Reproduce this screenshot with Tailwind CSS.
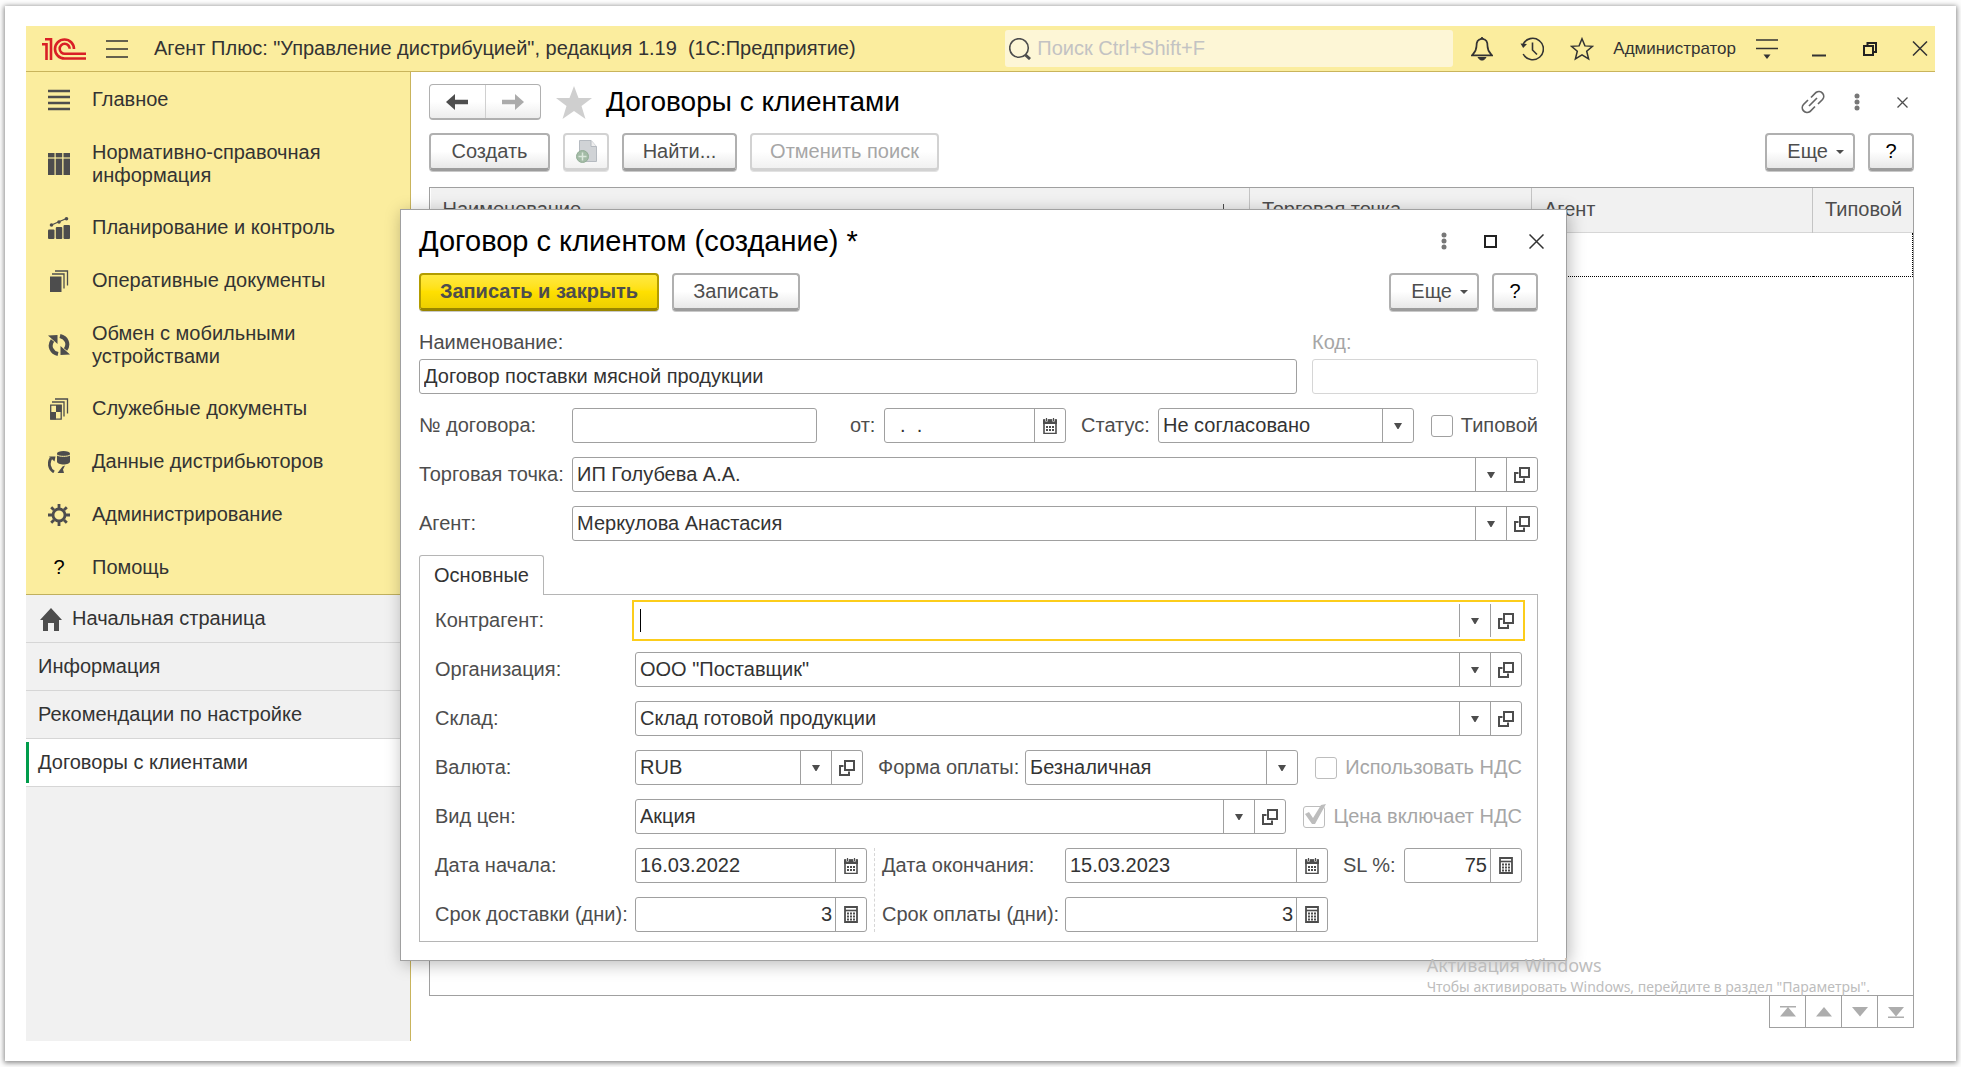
<!DOCTYPE html>
<html lang="ru">
<head>
<meta charset="utf-8">
<title>Договоры с клиентами</title>
<script src="https://cdn.jsdelivr.net/npm/@tailwindcss/browser@4"></script>
</head>
<body class="flex min-h-screen bg-[#fdfdfd] pt-[6px] pr-[5px] pb-[6px] pl-[5px] font-['Liberation_Sans',Arial,sans-serif] text-[20px] leading-[23px] text-[#333]">

<svg class="hidden" aria-hidden="true">
  <symbol id="down" viewBox="0 0 8 6"><path d="M0 0h8L4.500 6h-1z" fill="#4d4d4d"/></symbol>
  <symbol id="open" viewBox="0 0 16 16"><path d="M6 1h9v9H6z M4.500 6H1v9h9v-3.500" fill="none" stroke="#4d4d4d" stroke-width="2"/></symbol>
  <symbol id="cal" viewBox="0 0 14 16"><path d="M1 2h12v13.500H1z" fill="#fff" stroke="#4d4d4d" stroke-width="1.600"/><path d="M0 1.500h14V6H0z" fill="#4d4d4d"/><path d="M3.500 0v3.500M10.500 0v3.500" stroke="#fff" stroke-width="2.400"/><path d="M3.500 0v3M10.500 0v3" stroke="#4d4d4d" stroke-width="1.200"/><path d="M3 9h2m1 0h2m1 0h2M3 12h2m1 0h2m1 0h2" stroke="#4d4d4d" stroke-width="2"/></symbol>
  <symbol id="calc" viewBox="0 0 14 17"><path d="M1 1h12v15H1z" fill="#fff" stroke="#4d4d4d" stroke-width="1.800"/><path d="M1 4.500h12" stroke="#4d4d4d" stroke-width="1.600"/><path d="M3 7.500h2m1 0h2m1 0h2M3 10.500h2m1 0h2m1 0h2M3 13.500h2m1 0h2m1 0h2" stroke="#4d4d4d" stroke-width="1.800"/></symbol>
  <symbol id="dots" viewBox="0 0 6 18"><circle cx="3" cy="3" r="2.500"/><circle cx="3" cy="9" r="2.500"/><circle cx="3" cy="15" r="2.500"/></symbol>
</svg>

<div class="flex flex-1 bg-white px-[21px] py-[20px] shadow-[0_1px_5px_1px_rgba(0,0,0,0.45)]">
<div class="relative flex flex-1 flex-col">

  <header class="flex h-[46px] items-center border-b border-[#c9b45c] bg-[#fbed9e] pr-[7px] pl-[16px]">
    <svg class="h-[22px] w-[44px]" viewBox="0 0 44 22" fill="none" stroke="#d91f26" stroke-width="2.600"><path d="M0 6.300h4.500V22M3 1.300h6V22M44 20.500H22.500a9.500 9.500 0 1 1 9.500-9.500"/><path d="M44 15.800H23a5 5 0 1 1 4.700-5"/></svg>
    <button class="ml-[20px]" aria-label="Меню"><svg class="h-[18px] w-[22px]" viewBox="0 0 22 18" stroke="#333" stroke-width="1.400"><path d="M0 1h22M0 9h22M0 17h22"/></svg></button>
    <div class="ml-[26px] whitespace-nowrap">Агент Плюс: "Управление дистрибуцией", редакция 1.19&nbsp; (1С:Предприятие)</div>
    <label class="ml-auto flex h-[37px] w-[448px] items-center rounded-[3px] bg-[#fdf6d6] pl-[4px]">
      <svg class="h-[22px] w-[22px]" viewBox="0 0 22 22" fill="none" stroke="#4d4d4d"><circle cx="10" cy="10" r="9.300" stroke-width="1.600"/><path d="M16.500 17l4.500 4" stroke-width="3"/></svg>
      <input class="ml-[6px] min-w-0 flex-1 outline-none placeholder:text-[#c3c3c3]" placeholder="Поиск Ctrl+Shift+F" aria-label="Поиск">
    </label>
    <button class="ml-[18px]" aria-label="Уведомления"><svg class="h-[24px] w-[22px]" viewBox="0 0 22 24" fill="none" stroke="#333" stroke-width="1.700"><path d="M11 2c-4.500 0-5.500 3-5.500 7 0 5-2 6.500-4.500 9.300h20C18.500 15.500 16.500 14 16.500 9c0-4-1-7-5.500-7z"/><path d="M7 20.500h8l-2.500 2.500h-3zM9.500 1.500L11 .3l1.500 1.200z" fill="#333" stroke-width="1"/></svg></button>
    <button class="ml-[27px]" aria-label="История"><svg class="h-[24px] w-[24px]" viewBox="0 0 24 24" fill="none" stroke="#333" stroke-width="1.600"><path d="M3 7.500A10.700 10.700 0 1 1 3.200 17M12.500 5.500V13l4.500 4.500"/><path d="M.5 6.500l6.500.5-3.800 4z" fill="#333" stroke="none"/></svg></button>
    <button class="ml-[26px]" aria-label="Избранное"><svg class="h-[24px] w-[24px]" viewBox="0 0 24 24" fill="none" stroke="#333" stroke-width="1.500"><path d="M12 1.800l2.900 7.100 7.600.4-5.800 5 1.900 7.600L12 17.800l-6.600 4.100 1.900-7.600-5.800-5 7.600-.4z"/></svg></button>
    <div class="ml-[19px] text-[17px]">Администратор</div>
    <button class="ml-[20px]" aria-label="Настройки"><svg class="h-[22px] w-[22px]" viewBox="0 0 22 22"><path d="M0 2h22M0 10.500h22" stroke="#333" stroke-width="1.600"/><path d="M7.500 16.500h7L11 21z" fill="#333"/></svg></button>
    <button class="ml-[34px]" aria-label="Свернуть"><svg class="h-[16px] w-[14px]" viewBox="0 0 14 16"><path d="M0 14.500h14" stroke="#333" stroke-width="2"/></svg></button>
    <button class="ml-[37px]" aria-label="Восстановить"><svg class="h-[14px] w-[14px]" viewBox="0 0 14 14" fill="none" stroke="#222" stroke-width="2"><path d="M1 4h9v9H1zM4.500 3V1H13v9h-2"/></svg></button>
    <button class="ml-[35px]" aria-label="Закрыть"><svg class="h-[15px] w-[16px]" viewBox="0 0 16 15" stroke="#333" stroke-width="1.500"><path d="M1 .5l14 14M15 .5l-14 14"/></svg></button>
  </header>

  <div class="flex flex-1">
    <aside class="flex w-[385px] flex-col border-r border-[#c9b45c] bg-[#f1f1f1]">
      <nav class="border-b border-[#c0b05e] bg-[#fbed9e] pt-px">
        <a href="#" class="flex h-[53px] items-center gap-[22px] pl-[22px]">
          <svg class="h-[22px] w-[22px]" viewBox="0 0 22 22" stroke="#4d4d4d" stroke-width="2.600"><path d="M0 2h22M0 8h22M0 14h22M0 20h22"/></svg>Главное</a>
        <a href="#" class="flex h-[75px] items-center gap-[22px] pl-[22px]">
          <svg class="h-[22px] w-[22px]" viewBox="0 0 22 22" fill="#4d4d4d"><path d="M0 0h6.500v22H0zM7.700 0h6.500v22H7.700zM15.500 0H22v22h-6.500z"/><path d="M0 5h22" stroke="#fbed9e" stroke-width="1.200"/></svg><span>Нормативно-справочная<br>информация</span></a>
        <a href="#" class="flex h-[53px] items-center gap-[22px] pl-[22px]">
          <svg class="h-[22px] w-[22px]" viewBox="0 0 22 22" fill="#4d4d4d"><rect y="12.500" width="6.500" height="9.500" rx="1"/><rect x="7.800" y="10" width="6.500" height="12" rx="1"/><rect x="15.500" y="8" width="6.500" height="14" rx="1"/><path d="M3.500 8l8-3.500 7-3" fill="none" stroke="#4d4d4d" stroke-width="1.300"/><circle cx="3.500" cy="8" r="1.800"/><circle cx="11" cy="5" r="1.800"/><circle cx="18.500" cy="1.800" r="1.800"/></svg>Планирование и контроль</a>
        <a href="#" class="flex h-[53px] items-center gap-[22px] pl-[22px]">
          <svg class="h-[22px] w-[22px]" viewBox="0 0 22 22" fill="none" stroke="#4d4d4d" stroke-width="1.300"><path d="M2 6.500h11.500V22H2z" fill="#4d4d4d" stroke="none"/><path d="M4 4h12v14.500M7 1h12.500v14.500"/></svg>Оперативные документы</a>
        <a href="#" class="flex h-[75px] items-center gap-[22px] pl-[22px]">
          <svg class="h-[22px] w-[22px]" viewBox="0 0 22 22" fill="none" stroke="#4d4d4d" stroke-width="4"><path d="M10 20C3.500 18.500.500 12 4.500 6.500M12 2c6.500 1.500 9.500 8 5.500 13.500"/><path d="M0 1.500l9.500-.5v9zM22 20.500l-9.500.5v-9z" fill="#4d4d4d" stroke="none"/></svg><span>Обмен с мобильными<br>устройствами</span></a>
        <a href="#" class="flex h-[53px] items-center gap-[22px] pl-[22px]">
          <svg class="h-[22px] w-[22px]" viewBox="0 0 22 22" fill="none" stroke="#4d4d4d" stroke-width="1.300"><path d="M2.700 7.200h10.500v14H2.700zM4 4h12v14.500M7 1h12.500v14.500"/><path d="M8 7h5.500v7H8zM2.500 14H8v7.500H2.500z" fill="#4d4d4d" stroke="none"/></svg>Служебные документы</a>
        <a href="#" class="flex h-[53px] items-center gap-[22px] pl-[22px]">
          <svg class="h-[22px] w-[22px]" viewBox="0 0 22 22" fill="#4d4d4d"><path d="M9 2.500v8c0 4 13 4 13 0v-8z"/><ellipse cx="15.500" cy="2.300" rx="6.500" ry="2.200"/><path d="M9 4c2 1.800 11 1.800 13 0" fill="none" stroke="#fbed9e"/><path d="M6 21C1 18 0 12 3 7" fill="none" stroke="#4d4d4d" stroke-width="2.800"/><path d="M1 5.500h6.500l-1 5zM17 14.500l-2 4 1 3.500H9.500l5-6.500z"/></svg>Данные дистрибьюторов</a>
        <a href="#" class="flex h-[53px] items-center gap-[22px] pl-[22px]">
          <svg class="h-[22px] w-[22px]" viewBox="0 0 22 22" fill="none" stroke="#4d4d4d"><circle cx="11" cy="11" r="6" stroke-width="2.800"/><path d="M11 0v4M11 18v4M0 11h4M18 11h4M3.200 3.200L6 6M16 16l2.800 2.800M18.800 3.200L16 6M6 16l-2.800 2.800" stroke-width="2.800"/></svg>Администрирование</a>
        <a href="#" class="flex h-[53px] items-center gap-[22px] pl-[22px]">
          <span class="w-[22px] text-center text-black">?</span>Помощь</a>
      </nav>
      <a href="#" class="flex h-[48px] items-center gap-[10px] border-b border-[#d6d6d6] pl-[14px]">
        <svg class="h-[24px] w-[22px]" viewBox="0 0 22 24" fill="#4d4d4d"><path d="M11 1l11 12h-3v11h-5v-8H8v8H3V13H0z"/></svg>Начальная страница</a>
      <a href="#" class="flex h-[48px] items-center border-b border-[#d6d6d6] pl-[12px]">Информация</a>
      <a href="#" class="flex h-[48px] items-center border-b border-[#d6d6d6] pl-[12px]">Рекомендации по настройке</a>
      <a href="#" class="flex h-[48px] items-center border-b border-[#d6d6d6] bg-white"><span class="mr-[9px] h-[41px] w-[3px] bg-[#009c4b]"></span>Договоры с клиентами</a>
    </aside>

    <main class="flex flex-1 flex-col pt-[12px] pr-[21px] pb-[13px] pl-[18px]">
      <div class="flex h-[36px] items-center">
        <div class="flex h-[36px] w-[112px] rounded-[4px] border border-b-2 border-[#b0b0b0] bg-linear-to-b from-white from-50% to-[#ededed]">
          <button class="flex flex-1 items-center justify-center border-r border-[#d0d0d0]" aria-label="Назад"><svg class="h-[16px] w-[22px]" viewBox="0 0 22 16"><path d="M0 8l9-8v5.800h13v4.400H9V16z" fill="#4d4d4d"/></svg></button>
          <button class="flex flex-1 items-center justify-center" aria-label="Вперед"><svg class="h-[16px] w-[22px]" viewBox="0 0 22 16"><path d="M22 8l-9-8v5.800H0v4.400h13V16z" fill="#ababab"/></svg></button>
        </div>
        <svg class="ml-[15px] h-[33px] w-[36px]" viewBox="0 0 36 33"><path d="M18 0l4.500 12H36l-10.500 8 4 13L18 25 6.500 33l4-13L0 12h13.500z" fill="#cfcfcf"/></svg>
        <h1 class="ml-[14px] text-[28px] leading-[32px] text-black">Договоры с клиентами</h1>
        <a href="#" class="ml-auto" aria-label="Ссылка"><svg class="h-[24px] w-[24px]" viewBox="0 0 24 24" fill="none" stroke="#666" stroke-width="1.700"><path d="M10 7.500l5-5a4.800 4.800 0 0 1 6.500 7l-4.500 4.500M14 16.500l-5 5a4.800 4.800 0 0 1-6.500-7L7 10M8 16l8-8"/></svg></a>
        <button class="ml-[29px]" aria-label="Действия"><svg class="h-[18px] w-[6px] fill-[#777]"><use href="#dots"/></svg></button>
        <button class="mr-[6px] ml-[37px]" aria-label="Закрыть"><svg class="h-[11px] w-[11px]" viewBox="0 0 11 11" stroke="#4d4d4d" stroke-width="1.300"><path d="M.5.500l10 10M10.500.500l-10 10"/></svg></button>
      </div>

      <div class="mt-[13px] flex h-[38px]">
        <button class="w-[121px] rounded-[4px] border-2 border-b-3 border-[#b0b0b0] border-b-[#9c9c9c] bg-linear-to-b from-white from-50% to-[#e8e8e8] text-[#4d4d4d] shadow-[0_1px_0_#c9c9c9]">Создать</button>
        <button class="ml-[13px] flex w-[46px] items-center justify-center rounded-[4px] border-2 border-b-3 border-[#d2d2d2] bg-linear-to-b from-white from-50% to-[#f1f1f1] shadow-[0_1px_0_#e2e2e2]" aria-label="Скопировать"><svg class="h-[23px] w-[21px]" viewBox="0 0 21 23"><path d="M3.500.500H15l5.500 6v15h-17z" fill="#d0d3d6" stroke="#b5bac0"/><path d="M15 .5v6h5.500" fill="#eee" stroke="#b5bac0"/><circle cx="6.500" cy="16.500" r="6" fill="#a3bba6" stroke="#92ad96"/><path d="M6.500 12.500v8M2.500 16.500h8" stroke="#dbe8dc" stroke-width="1.500"/></svg></button>
        <button class="ml-[13px] w-[115px] rounded-[4px] border-2 border-b-3 border-[#b0b0b0] border-b-[#9c9c9c] bg-linear-to-b from-white from-50% to-[#e8e8e8] text-[#4d4d4d] shadow-[0_1px_0_#c9c9c9]">Найти...</button>
        <button class="ml-[13px] w-[189px] rounded-[4px] border-2 border-b-3 border-[#d2d2d2] bg-linear-to-b from-white from-50% to-[#f1f1f1] text-[#a6a6a6] shadow-[0_1px_0_#e2e2e2]">Отменить поиск</button>
        <button class="ml-auto flex w-[90px] items-center justify-end gap-[8px] rounded-[4px] border-2 border-b-3 border-[#b0b0b0] border-b-[#9c9c9c] bg-linear-to-b from-white from-50% to-[#e8e8e8] pr-[9px] text-[#4d4d4d] shadow-[0_1px_0_#c9c9c9]">Еще<svg class="h-[4px] w-[8px]" viewBox="0 0 8 4"><path d="M0 0h8L4 4z" fill="#4d4d4d"/></svg></button>
        <button class="ml-[13px] w-[46px] rounded-[4px] border-2 border-b-3 border-[#b0b0b0] border-b-[#9c9c9c] bg-linear-to-b from-white from-50% to-[#e8e8e8] text-black shadow-[0_1px_0_#c9c9c9]">?</button>
      </div>

      <div class="mt-[16px] flex-1 border border-[#a0a0a0]">
        <table class="w-full table-fixed border-collapse text-[#4d4d4d]">
          <colgroup><col><col class="w-[282px]"><col class="w-[281px]"><col class="w-[100px]"></colgroup>
          <thead>
            <tr class="h-[44px] border-b border-[#d6d6d6] bg-[#f1f1f1]">
              <th class="pr-[21px] pl-[12px] text-left font-normal"><span class="flex items-center justify-between">Наименование<svg class="h-[12px] w-[9px]" viewBox="0 0 9 12" fill="none" stroke="#4d4d4d"><path d="M4.500 0v11M1 8l3.500 3.500L8 8"/></svg></span></th>
              <th class="border-l border-[#c4c4c4] pl-[12px] text-left font-normal">Торговая точка</th>
              <th class="border-l border-[#c4c4c4] pl-[12px] text-left font-normal">Агент</th>
              <th class="border-l border-[#c4c4c4] pl-[12px] text-left font-normal">Типовой</th>
            </tr>
          </thead>
          <tbody>
            <tr class="h-[44px]"><td colspan="4" class="border border-dotted border-black"></td></tr>
          </tbody>
        </table>
      </div>
      <div class="flex h-[32px] self-end border-x border-b border-[#a0a0a0]">
        <button class="flex w-[36px] items-center justify-center border-r border-[#a0a0a0]" aria-label="В начало"><svg class="h-[12px] w-[16px]" viewBox="0 0 16 12" fill="#adadad"><path d="M0 0h16v1.500H0zM8 1l8 9.500H0z"/></svg></button>
        <button class="flex w-[36px] items-center justify-center border-r border-[#a0a0a0]" aria-label="Вверх"><svg class="h-[12px] w-[16px]" viewBox="0 0 16 12" fill="#adadad"><path d="M8 1l8 9.500H0z"/></svg></button>
        <button class="flex w-[36px] items-center justify-center border-r border-[#a0a0a0]" aria-label="Вниз"><svg class="h-[12px] w-[16px]" viewBox="0 0 16 12" fill="#adadad"><path d="M8 10.500L16 1H0z"/></svg></button>
        <button class="flex w-[35px] items-center justify-center" aria-label="В конец"><svg class="h-[12px] w-[16px]" viewBox="0 0 16 12" fill="#adadad"><path d="M8 10.500L16 1H0zM0 10.500h16V12H0z"/></svg></button>
      </div>
    </main>
  </div>

  <section role="dialog" aria-label="Договор с клиентом" class="absolute top-[183px] right-[368px] left-[374px] border border-[#a0a0a0] bg-white pt-[14px] pr-[28px] pb-[18px] pl-[18px] shadow-[2px_3px_16px_rgba(0,0,0,0.28)]">
    <div class="flex h-[34px] items-center">
      <h2 class="text-[29px] leading-[32px] text-black">Договор с клиентом (создание) *</h2>
      <button class="ml-auto" aria-label="Действия"><svg class="h-[18px] w-[6px] fill-[#777]"><use href="#dots"/></svg></button>
      <button class="ml-[37px]" aria-label="Развернуть"><svg class="h-[13px] w-[13px]" viewBox="0 0 13 13"><path d="M1 1h11v11H1z" fill="none" stroke="#222" stroke-width="2"/></svg></button>
      <button class="mr-[-6px] ml-[32px]" aria-label="Закрыть"><svg class="h-[15px] w-[15px]" viewBox="0 0 15 15" stroke="#333" stroke-width="1.500"><path d="M.5.500l14 14M14.500.500l-14 14"/></svg></button>
    </div>

    <div class="mt-[15px] flex h-[38px]">
      <button class="w-[240px] rounded-[4px] border-2 border-b-3 border-[#b29c00] border-b-[#988500] bg-linear-to-b from-[#ffe93e] via-[#ffe000] to-[#edcf00] font-bold text-[#4d4d4d] shadow-[0_1px_0_#c9c9c9]">Записать и закрыть</button>
      <button class="ml-[13px] w-[128px] rounded-[4px] border-2 border-b-3 border-[#b0b0b0] border-b-[#9c9c9c] bg-linear-to-b from-white from-50% to-[#e8e8e8] text-[#4d4d4d] shadow-[0_1px_0_#c9c9c9]">Записать</button>
      <button class="ml-auto flex w-[90px] items-center justify-end gap-[8px] rounded-[4px] border-2 border-b-3 border-[#b0b0b0] border-b-[#9c9c9c] bg-linear-to-b from-white from-50% to-[#e8e8e8] pr-[9px] text-[#4d4d4d] shadow-[0_1px_0_#c9c9c9]">Еще<svg class="h-[4px] w-[8px]" viewBox="0 0 8 4"><path d="M0 0h8L4 4z" fill="#4d4d4d"/></svg></button>
      <button class="ml-[13px] w-[46px] rounded-[4px] border-2 border-b-3 border-[#b0b0b0] border-b-[#9c9c9c] bg-linear-to-b from-white from-50% to-[#e8e8e8] text-black shadow-[0_1px_0_#c9c9c9]">?</button>
    </div>

    <form class="mt-[20px] flex flex-col gap-[14px] text-[#4d4d4d]">
      <div class="flex gap-[15px]">
        <label class="flex-1">Наименование:
          <input class="mt-[5px] block h-[35px] w-full rounded-[3px] border border-[#a0a0a0] px-[4px] text-[#333]" value="Договор поставки мясной продукции"></label>
        <label class="w-[226px] text-[#a6a6a6]">Код:
          <input disabled class="mt-[5px] block h-[35px] w-full rounded-[3px] border border-[#d6d6d6] px-[4px]"></label>
      </div>

      <div class="flex items-center">
        <label for="num" class="w-[153px]">№ договора:</label>
        <input id="num" class="h-[35px] w-[245px] rounded-[3px] border border-[#a0a0a0] px-[4px] text-[#333]">
        <label for="from" class="ml-[33px] w-[34px]">от:</label>
        <div class="flex h-[35px] w-[182px] rounded-[3px] border border-[#a0a0a0]">
          <input id="from" class="min-w-0 flex-1 px-[4px] text-[#333]" value="&nbsp;&nbsp;.&nbsp;&nbsp;.">
          <button type="button" class="flex w-[31px] items-center justify-center border-l border-[#a0a0a0]" aria-label="Календарь"><svg class="h-[16px] w-[14px]"><use href="#cal"/></svg></button>
        </div>
        <label for="status" class="ml-[15px] w-[77px]">Статус:</label>
        <div class="relative flex h-[35px] min-w-0 flex-1 rounded-[3px] border border-[#a0a0a0]">
          <select id="status" class="min-w-0 flex-1 appearance-none px-[4px] text-[#333]"><option>Не согласовано</option></select>
          <span class="pointer-events-none flex w-[31px] items-center justify-center border-l border-[#a0a0a0]"><svg class="h-[6px] w-[8px]"><use href="#down"/></svg></span>
        </div>
        <label class="ml-[17px] flex items-center gap-[8px]"><input type="checkbox" class="h-[22px] w-[22px] appearance-none rounded-[3px] border border-[#a0a0a0] bg-white">Типовой</label>
      </div>

      <div class="flex items-center">
        <label for="point" class="w-[153px] whitespace-nowrap">Торговая точка:</label>
        <div class="flex h-[35px] min-w-0 flex-1 rounded-[3px] border border-[#a0a0a0]">
          <input id="point" class="min-w-0 flex-1 px-[4px] text-[#333]" value="ИП Голубева А.А.">
          <button type="button" class="flex w-[31px] items-center justify-center border-l border-[#a0a0a0]" aria-label="Выбрать"><svg class="h-[6px] w-[8px]"><use href="#down"/></svg></button>
          <button type="button" class="flex w-[31px] items-center justify-center border-l border-[#a0a0a0]" aria-label="Открыть"><svg class="h-[16px] w-[16px]"><use href="#open"/></svg></button>
        </div>
      </div>

      <div class="flex items-center">
        <label for="agent" class="w-[153px]">Агент:</label>
        <div class="flex h-[35px] min-w-0 flex-1 rounded-[3px] border border-[#a0a0a0]">
          <input id="agent" class="min-w-0 flex-1 px-[4px] text-[#333]" value="Меркулова Анастасия">
          <button type="button" class="flex w-[31px] items-center justify-center border-l border-[#a0a0a0]" aria-label="Выбрать"><svg class="h-[6px] w-[8px]"><use href="#down"/></svg></button>
          <button type="button" class="flex w-[31px] items-center justify-center border-l border-[#a0a0a0]" aria-label="Открыть"><svg class="h-[16px] w-[16px]"><use href="#open"/></svg></button>
        </div>
      </div>

      <div class="flex flex-col">
        <button type="button" role="tab" class="z-10 mb-[-1px] h-[40px] w-[125px] rounded-t-[3px] border border-b-0 border-[#b5b5b5] bg-white text-[#333]">Основные</button>
        <div class="flex flex-col gap-[14px] border border-[#b5b5b5] px-[15px] pt-[8px] pb-[9px]">

          <div class="flex items-center">
            <label for="contr" class="w-[200px]">Контрагент:</label>
            <div class="flex h-[35px] min-w-0 flex-1 items-center bg-white outline-2 outline-offset-1 outline-[#fccd1b]">
              <span class="ml-[5px] h-[23px] w-px bg-black"></span>
              <input id="contr" class="min-w-0 flex-1 self-stretch px-[4px] text-[#333] outline-none">
              <button type="button" class="flex h-[33px] w-[31px] items-center justify-center border-l border-[#a0a0a0]" aria-label="Выбрать"><svg class="h-[6px] w-[8px]"><use href="#down"/></svg></button>
              <button type="button" class="mr-px flex h-[33px] w-[31px] items-center justify-center border-l border-[#a0a0a0]" aria-label="Открыть"><svg class="h-[16px] w-[16px]"><use href="#open"/></svg></button>
            </div>
          </div>

          <div class="flex items-center">
            <label for="org" class="w-[200px]">Организация:</label>
            <div class="flex h-[35px] min-w-0 flex-1 rounded-[3px] border border-[#a0a0a0]">
              <input id="org" class="min-w-0 flex-1 px-[4px] text-[#333]" value='ООО "Поставщик"'>
              <button type="button" class="flex w-[31px] items-center justify-center border-l border-[#a0a0a0]" aria-label="Выбрать"><svg class="h-[6px] w-[8px]"><use href="#down"/></svg></button>
              <button type="button" class="flex w-[31px] items-center justify-center border-l border-[#a0a0a0]" aria-label="Открыть"><svg class="h-[16px] w-[16px]"><use href="#open"/></svg></button>
            </div>
          </div>

          <div class="flex items-center">
            <label for="store" class="w-[200px]">Склад:</label>
            <div class="flex h-[35px] min-w-0 flex-1 rounded-[3px] border border-[#a0a0a0]">
              <input id="store" class="min-w-0 flex-1 px-[4px] text-[#333]" value="Склад готовой продукции">
              <button type="button" class="flex w-[31px] items-center justify-center border-l border-[#a0a0a0]" aria-label="Выбрать"><svg class="h-[6px] w-[8px]"><use href="#down"/></svg></button>
              <button type="button" class="flex w-[31px] items-center justify-center border-l border-[#a0a0a0]" aria-label="Открыть"><svg class="h-[16px] w-[16px]"><use href="#open"/></svg></button>
            </div>
          </div>

          <div class="flex items-center">
            <label for="cur" class="w-[200px]">Валюта:</label>
            <div class="flex h-[35px] w-[228px] rounded-[3px] border border-[#a0a0a0]">
              <input id="cur" class="min-w-0 flex-1 px-[4px] text-[#333]" value="RUB">
              <button type="button" class="flex w-[31px] items-center justify-center border-l border-[#a0a0a0]" aria-label="Выбрать"><svg class="h-[6px] w-[8px]"><use href="#down"/></svg></button>
              <button type="button" class="flex w-[31px] items-center justify-center border-l border-[#a0a0a0]" aria-label="Открыть"><svg class="h-[16px] w-[16px]"><use href="#open"/></svg></button>
            </div>
            <label for="pay" class="ml-[15px] w-[147px]">Форма оплаты:</label>
            <div class="flex h-[35px] min-w-0 flex-1 rounded-[3px] border border-[#a0a0a0]">
              <select id="pay" class="min-w-0 flex-1 appearance-none px-[4px] text-[#333]"><option>Безналичная</option></select>
              <span class="pointer-events-none flex w-[31px] items-center justify-center border-l border-[#a0a0a0]"><svg class="h-[6px] w-[8px]"><use href="#down"/></svg></span>
            </div>
            <label class="ml-[17px] flex items-center gap-[8px] text-[#a6a6a6]"><input type="checkbox" disabled class="h-[22px] w-[22px] appearance-none rounded-[3px] border border-[#bdbdbd] bg-white">Использовать НДС</label>
          </div>

          <div class="flex items-center">
            <label for="price" class="w-[200px]">Вид цен:</label>
            <div class="flex h-[35px] min-w-0 flex-1 rounded-[3px] border border-[#a0a0a0]">
              <input id="price" class="min-w-0 flex-1 px-[4px] text-[#333]" value="Акция">
              <button type="button" class="flex w-[31px] items-center justify-center border-l border-[#a0a0a0]" aria-label="Выбрать"><svg class="h-[6px] w-[8px]"><use href="#down"/></svg></button>
              <button type="button" class="flex w-[31px] items-center justify-center border-l border-[#a0a0a0]" aria-label="Открыть"><svg class="h-[16px] w-[16px]"><use href="#open"/></svg></button>
            </div>
            <label class="relative ml-[17px] flex items-center gap-[8px] text-[#a6a6a6]"><input type="checkbox" checked disabled class="h-[22px] w-[22px] appearance-none rounded-[3px] border border-[#bdbdbd] bg-white">
              <svg class="absolute top-[-1px] left-[2px] h-[20px] w-[22px]" viewBox="0 0 22 20"><path d="M0 10l4-2 4 6L16 1l5-1L10 20H7z" fill="#bdbdbd"/></svg>Цена включает НДС</label>
          </div>

          <div class="flex">
            <div class="flex flex-col gap-[14px]">
              <div class="flex items-center">
                <label for="d1" class="w-[200px]">Дата начала:</label>
                <div class="flex h-[35px] w-[232px] rounded-[3px] border border-[#a0a0a0]">
                  <input id="d1" class="min-w-0 flex-1 px-[4px] text-[#333]" value="16.03.2022">
                  <button type="button" class="flex w-[31px] items-center justify-center border-l border-[#a0a0a0]" aria-label="Календарь"><svg class="h-[16px] w-[14px]"><use href="#cal"/></svg></button>
                </div>
              </div>
              <div class="flex items-center">
                <label for="n1" class="w-[200px] whitespace-nowrap">Срок доставки (дни):</label>
                <div class="flex h-[35px] w-[232px] rounded-[3px] border border-[#a0a0a0]">
                  <input id="n1" class="min-w-0 flex-1 px-[3px] text-right text-[#333]" value="3">
                  <button type="button" class="flex w-[31px] items-center justify-center border-l border-[#a0a0a0]" aria-label="Калькулятор"><svg class="h-[17px] w-[14px]"><use href="#calc"/></svg></button>
                </div>
              </div>
            </div>
            <div class="ml-[7px] flex min-w-0 flex-1 flex-col gap-[14px] border-l border-dashed border-[#d6d6d6] pl-[7px]">
              <div class="flex items-center">
                <label for="d2" class="w-[183px] shrink-0">Дата окончания:</label>
                <div class="flex h-[35px] min-w-0 flex-1 rounded-[3px] border border-[#a0a0a0]">
                  <input id="d2" class="min-w-0 flex-1 px-[4px] text-[#333]" value="15.03.2023">
                  <button type="button" class="flex w-[31px] items-center justify-center border-l border-[#a0a0a0]" aria-label="Календарь"><svg class="h-[16px] w-[14px]"><use href="#cal"/></svg></button>
                </div>
                <label for="sl" class="ml-[15px] w-[61px]">SL %:</label>
                <div class="flex h-[35px] w-[118px] rounded-[3px] border border-[#a0a0a0]">
                  <input id="sl" class="min-w-0 flex-1 px-[3px] text-right text-[#333]" value="75">
                  <button type="button" class="flex w-[31px] items-center justify-center border-l border-[#a0a0a0]" aria-label="Калькулятор"><svg class="h-[17px] w-[14px]"><use href="#calc"/></svg></button>
                </div>
              </div>
              <div class="flex items-center pr-[194px]">
                <label for="n2" class="w-[183px] shrink-0 whitespace-nowrap">Срок оплаты (дни):</label>
                <div class="flex h-[35px] min-w-0 flex-1 rounded-[3px] border border-[#a0a0a0]">
                  <input id="n2" class="min-w-0 flex-1 px-[3px] text-right text-[#333]" value="3">
                  <button type="button" class="flex w-[31px] items-center justify-center border-l border-[#a0a0a0]" aria-label="Калькулятор"><svg class="h-[17px] w-[14px]"><use href="#calc"/></svg></button>
                </div>
              </div>
            </div>
          </div>
        </div>
      </div>
    </form>
  </section>

  <div class="pointer-events-none absolute right-[65px] bottom-[44px] whitespace-nowrap font-['Noto_Sans',sans-serif] text-[#bdbdbd]">
    <div class="text-[18px] leading-[24px]">Активация Windows</div>
    <div class="text-[14px] leading-[20px]">Чтобы активировать Windows, перейдите в раздел "Параметры".</div>
  </div>
</div>
</div>
</body>
</html>
